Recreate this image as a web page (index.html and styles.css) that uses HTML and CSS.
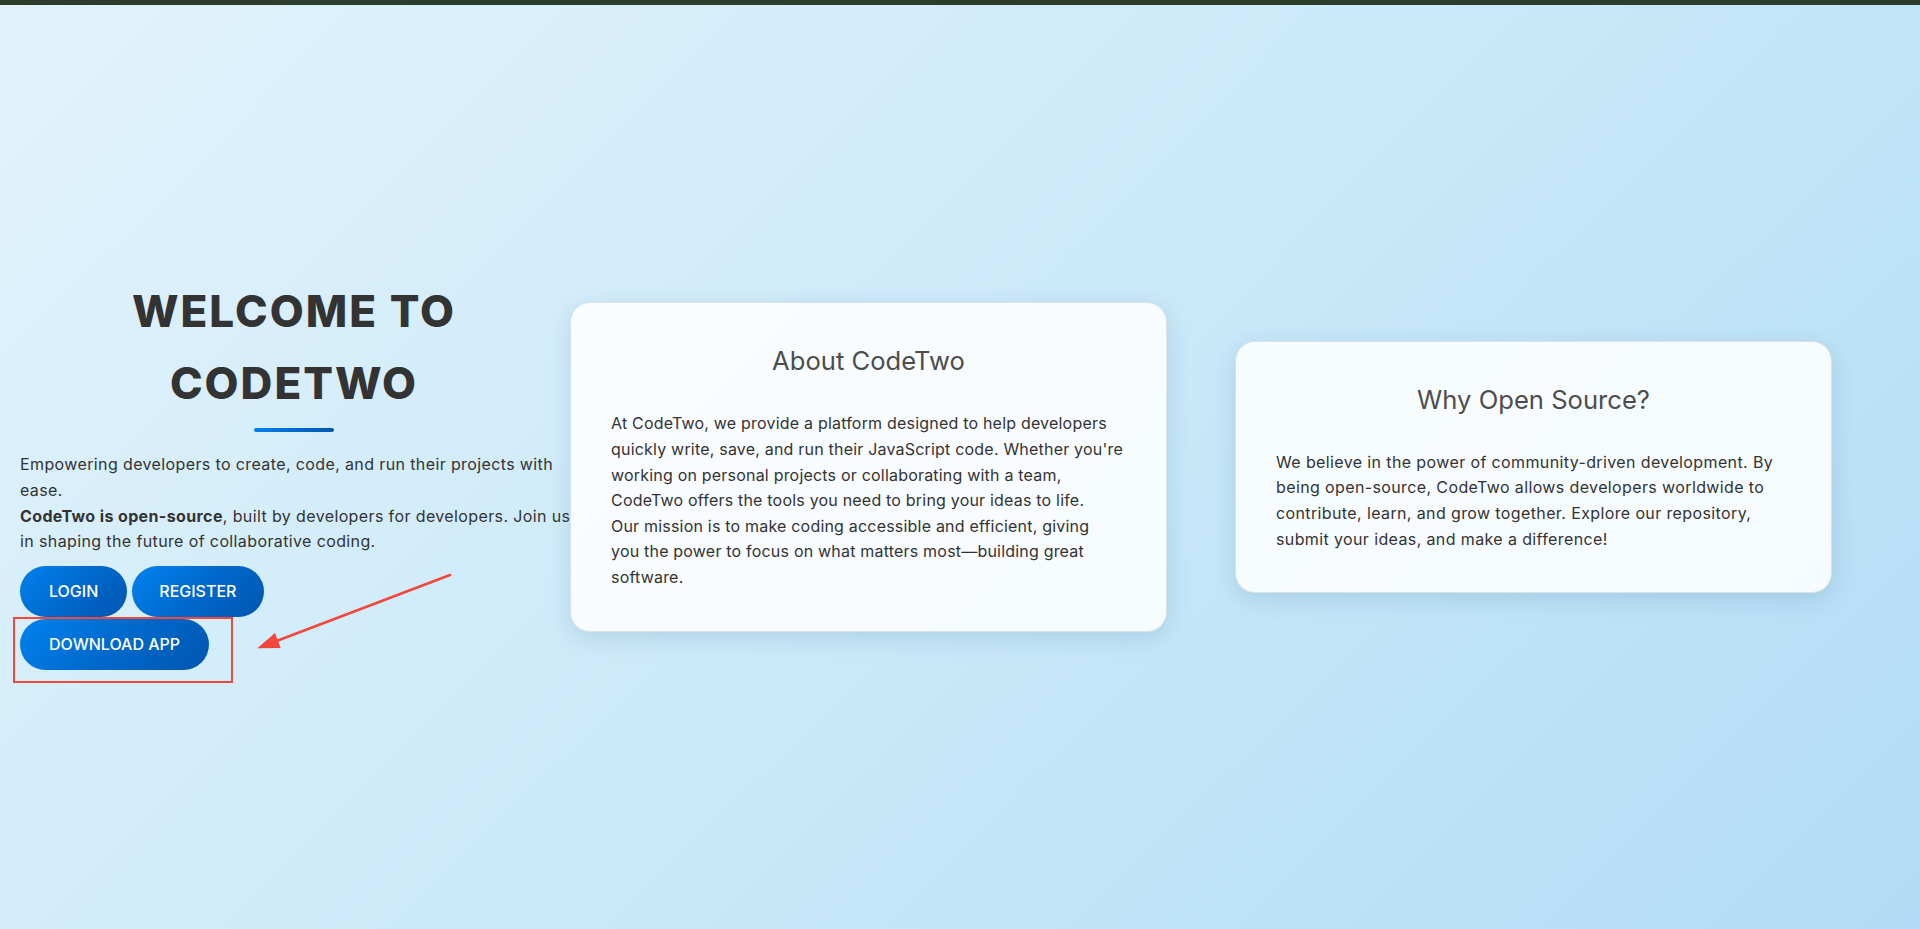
FILE: index.html
```html
<!DOCTYPE html>
<html lang="en">
<head>
<meta charset="utf-8">
<title>CodeTwo</title>
<link rel="stylesheet" href="styles.css">
</head>
<body>
<div class="topbar"></div>
<main class="page">
  <section class="intro">
    <h1 class="intro-title">Welcome to<br>CodeTwo</h1>
    <div class="intro-divider"></div>
    <p class="intro-text">Empowering developers to create, code, and run their projects with<br>ease.<br><strong>CodeTwo is open-source</strong>, built by developers for developers. Join us<br>in shaping the future of collaborative coding.</p>
    <div class="btn-row">
      <a class="btn" href="#">LOGIN</a>
      <a class="btn btn-narrow" href="#">REGISTER</a>
    </div>
    <div class="btn-row">
      <a class="btn" href="#">DOWNLOAD APP</a>
    </div>
  </section>
  <section class="card card-about">
    <h2 class="card-title">About CodeTwo</h2>
    <p class="card-text">At CodeTwo, we provide a platform designed to help developers<br>quickly write, save, and run their JavaScript code. Whether you're<br>working on personal projects or collaborating with a team,<br>CodeTwo offers the tools you need to bring your ideas to life.<br>Our mission is to make coding accessible and efficient, giving<br>you the power to focus on what matters most—building great<br>software.</p>
  </section>
  <section class="card card-why">
    <h2 class="card-title">Why Open Source?</h2>
    <p class="card-text">We believe in the power of community-driven development. By<br>being open-source, CodeTwo allows developers worldwide to<br>contribute, learn, and grow together. Explore our repository,<br>submit your ideas, and make a difference!</p>
  </section>
</main>
<div class="annot-box"></div>
<svg class="annot-arrow" width="1920" height="929" viewBox="0 0 1920 929">
  <line x1="450" y1="575" x2="270" y2="643.5" stroke="#f2473a" stroke-width="2.6" stroke-linecap="round"/>
  <polygon points="257.3,648.3 275,633 280.7,648" fill="#f2473a"/>
</svg>
</body>
</html>
```
FILE: styles.css
```css
* { box-sizing: border-box; }

html, body {
  margin: 0;
  padding: 0;
}

body {
  font-family: "Inter", "Open Sans", sans-serif;
  font-size: 16px;
  letter-spacing: 0.38px;
  color: #333;
  background: linear-gradient(135deg, #e2f3fc 0%, #cbe9f9 50%, #b2dcf5 100%);
  min-height: 100vh;
  overflow: hidden;
}

.topbar {
  height: 5px;
  background: #2c3d2c;
}

.page {
  display: flex;
  align-items: center;
  height: calc(100vh - 5px);
  padding-left: 20px;
}

.intro {
  width: 548px;
  flex: none;
  margin-bottom: -13px;
}

.intro-title {
  margin: 0;
  font-size: 44px;
  line-height: 72px;
  font-weight: 800;
  letter-spacing: 2px;
  text-transform: uppercase;
  text-align: center;
  color: #333;
}

.intro-divider {
  width: 80px;
  height: 4px;
  margin: 9px auto 0;
  border-radius: 2px;
  background: linear-gradient(90deg, #007fea, #0057b1);
}

.intro-text {
  margin: 20px 0 11px;
  line-height: 25.6px;
  white-space: nowrap;
}

.intro-text strong {
  font-weight: 700;
}

.btn-row {
  display: flex;
  gap: 4.5px;
  margin-bottom: 1.5px;
}

.btn {
  display: inline-block;
  padding: 15px 29px;
  line-height: 21.5px;
  border-radius: 30px;
  font-size: 16px;
  font-weight: 500;
  letter-spacing: 0;
  color: #fff;
  text-decoration: none;
  background: linear-gradient(135deg, #0082ef 0%, #0069cc 50%, #0056b0 100%);
}

.btn-narrow {
  padding-left: 27.5px;
  padding-right: 27.5px;
}

.card {
  flex: none;
  width: 597px;
  padding: 40px;
  border: 1px solid rgba(190, 205, 215, 0.55);
  border-radius: 20px;
  background: rgba(255, 255, 255, 0.86);
  box-shadow: 0 6px 22px rgba(40, 90, 130, 0.16);
}

.card-about {
  margin-left: 2px;
}

.card-about .card-text {
  letter-spacing: 0.2px;
}

.card-why {
  margin-left: 68px;
}

.card-title {
  margin: 0 0 32px;
  font-size: 25.6px;
  line-height: 36px;
  font-weight: 400;
  letter-spacing: 0;
  text-align: center;
  color: #4d4d4d;
}

.card-text {
  margin: 0;
  line-height: 25.6px;
  color: #333;
  white-space: nowrap;
}

.annot-box {
  position: absolute;
  left: 13px;
  top: 617px;
  width: 220px;
  height: 66px;
  border: 2px solid #f2473a;
}

.annot-arrow {
  position: absolute;
  left: 0;
  top: 0;
  pointer-events: none;
}
```
